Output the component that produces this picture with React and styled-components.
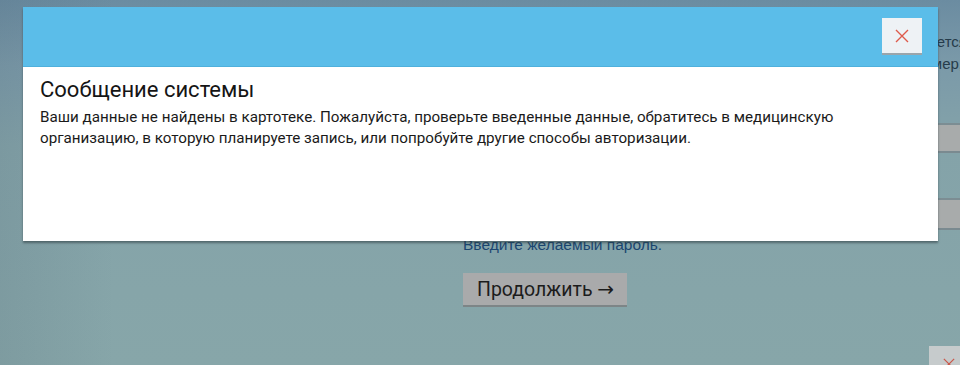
import React from "react";
import styled, { createGlobalStyle } from "styled-components";

const Global = createGlobalStyle`
  html, body { margin: 0; padding: 0; }
  body { font-family: Roboto, "Noto Sans", Arial, sans-serif; }
`;

const Page = styled.div`
  position: relative;
  width: 960px;
  height: 365px;
  overflow: hidden;
  background:
    linear-gradient(90deg, rgba(60, 80, 95, 0.12) 0%, rgba(60, 80, 95, 0) 12%),
    linear-gradient(180deg, #6b8ca1 0%, #7b9aa9 18%, #84a3a9 40%, #87a6a9 100%);
`;

const Form = styled.div`
  display: flex;
  flex-direction: column;
  align-items: stretch;
  width: 512px;
  margin-left: 463px;
  padding-top: 32px;
`;

const InfoLine = styled.div`
  height: 20px;
  line-height: 20px;
  margin-top: ${(p) => p.$mt || 0}px;
  padding-right: ${(p) => p.$pr || 0}px;
  text-align: right;
  white-space: nowrap;
  font-family: "Liberation Sans", Arial, sans-serif;
  font-size: 15px;
  color: #263c4b;
`;

const Field = styled.div`
  height: ${(p) => p.$h}px;
  margin-top: ${(p) => p.$mt}px;
  box-sizing: border-box;
  background: #a8abab;
  border-top: 2px solid #7c8d93;
  border-bottom: 2px solid #7a8a90;
`;

const Hint = styled.div`
  margin-top: 6px;
  height: 18px;
  line-height: 18px;
  font-family: "Liberation Sans", Arial, sans-serif;
  font-size: 15.5px;
  color: #1b4670;
`;

const ContinueButton = styled.button`
  align-self: flex-start;
  margin-top: 19px;
  height: 34px;
  width: 164px;
  padding: 0 0 0 14px;
  text-align: left;
  border: none;
  border-bottom: 2px solid #7d8587;
  background: #a9aaab;
  font-family: Roboto, Arial, sans-serif;
  font-size: 19.5px;
  color: #1c1c1c;
  cursor: pointer;
`;

const Arrow = styled.span`
  font-family: "DejaVu Sans", sans-serif;
  font-size: 20px;
`;

const CornerButton = styled.div`
  position: absolute;
  left: 929px;
  top: 346px;
  width: 40px;
  height: 36px;
  background: #c6cbcc;
  display: flex;
  justify-content: center;
  align-items: center;
`;

const Modal = styled.div`
  position: absolute;
  left: 23px;
  top: 7px;
  width: 915px;
  height: 234px;
  background: #fff;
  box-shadow: 0 2px 2px rgba(40, 55, 60, 0.55);
  display: flex;
  flex-direction: column;
`;

const Header = styled.div`
  height: 60px;
  box-sizing: border-box;
  background: #5bbde9;
  border-bottom: 1px solid #4fb0dc;
  display: flex;
  justify-content: flex-end;
  align-items: flex-start;
  padding: 11px 16px 0 0;
`;

const CloseButton = styled.button`
  width: 40px;
  height: 37px;
  box-sizing: border-box;
  border: none;
  border-bottom: 2px solid #9aa5ab;
  background: #eef2f5;
  display: flex;
  justify-content: center;
  align-items: center;
  padding: 0;
  cursor: pointer;
`;

const Body = styled.div`
  padding: 8px 17px 0 17px;
`;

const Title = styled.h2`
  margin: 0;
  font-family: Roboto, Arial, sans-serif;
  font-weight: 400;
  font-size: 22px;
  line-height: 29px;
  color: #151515;
`;

const Message = styled.p`
  margin: 3px 0 0 0;
  max-width: 845px;
  font-family: Roboto, Arial, sans-serif;
  font-size: 15.2px;
  line-height: 21px;
  color: #1a1a1a;
`;

const Cross = ({ size = 14, color = "#de5a4b" }) => (
  <svg width={size} height={size} viewBox="0 0 14 14">
    <path d="M1 1 L13 13 M13 1 L1 13" stroke={color} strokeWidth="1.4" fill="none" />
  </svg>
);

export default function App() {
  return (
    <>
      <Global />
      <Page>
        <Form>
          <InfoLine $pr={8}>Номер полиса ОМС требуется</InfoLine>
          <InfoLine $mt={2} $pr={12}>Укажите номер,</InfoLine>
          <Field $h={30} $mt={49} />
          <Field $h={32} $mt={45} />
          <Hint>Введите желаемый пароль.</Hint>
          <ContinueButton>
            Продолжить <Arrow>→</Arrow>
          </ContinueButton>
        </Form>
        <CornerButton>
          <Cross size={12} color="#c9584a" />
        </CornerButton>
        <Modal>
          <Header>
            <CloseButton aria-label="Закрыть">
              <Cross size={14} />
            </CloseButton>
          </Header>
          <Body>
            <Title>Сообщение системы</Title>
            <Message>
              Ваши данные не найдены в картотеке. Пожалуйста, проверьте введенные данные, обратитесь в медицинскую
              организацию, в которую планируете запись, или попробуйте другие способы авторизации.
            </Message>
          </Body>
        </Modal>
      </Page>
    </>
  );
}
